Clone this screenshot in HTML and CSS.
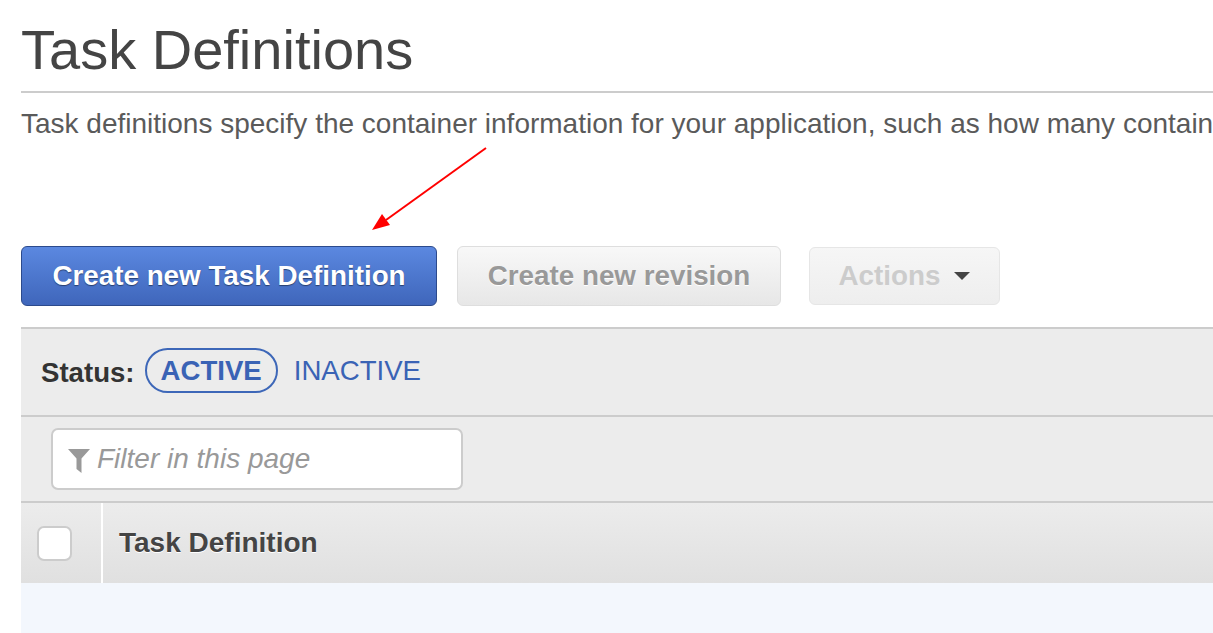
FILE: index.html
```html
<!DOCTYPE html>
<html>
<head>
<meta charset="utf-8">
<link rel="stylesheet" href="styles.css">
</head>
<body>
<div class="page">
  <h1 class="title">Task Definitions</h1>
  <p class="desc">Task definitions specify the container information for your application, such as how many containers are part of your task, what resources they will use, how they are linked together, and which host ports they will use.</p>
  <div class="toolbar">
    <button class="btn btn-primary">Create new Task Definition</button>
    <button class="btn btn-default">Create new revision</button>
    <button class="btn btn-actions">Actions <span class="caret"></span></button>
  </div>
  <div class="panel">
    <div class="status-row">
      <span class="status-label">Status:</span>
      <span class="pill">ACTIVE</span>
      <span class="status-link">INACTIVE</span>
    </div>
    <div class="filter-row">
      <div class="filter">
        <svg class="funnel" width="22" height="24" viewBox="0 0 22 24"><path d="M0 0 H22 L13.5 9.5 V24 L8.5 20 V9.5 Z" fill="#999"/></svg>
        <span class="placeholder">Filter in this page</span>
      </div>
    </div>
    <div class="table-head">
      <div class="check-cell"><span class="checkbox"></span></div>
      <div class="head-cell">Task Definition</div>
    </div>
    <div class="table-body"></div>
  </div>
  <svg class="arrow" width="140" height="100" viewBox="0 0 140 100">
    <line x1="136" y1="2" x2="36" y2="74" stroke="#f00" stroke-width="2"/>
    <path d="M22 84 L32 68 L40 79 Z" fill="#f00"/>
  </svg>
</div>
</body>
</html>
```
FILE: styles.css
```css
html, body {
  margin: 0;
  padding: 0;
  background: #fff;
  font-family: "Liberation Sans", Arial, sans-serif;
}
.page {
  position: relative;
  padding-left: 21px;
  height: 633px;
  overflow: hidden;
}
.title {
  margin: 18px 0 0 0;
  font-size: 56px;
  line-height: 63px;
  font-weight: normal;
  color: #444;
  padding-bottom: 10px;
  border-bottom: 2px solid #ccc;
  width: 1400px;
}
.desc {
  margin: 13px 0 0 0;
  font-size: 28px;
  line-height: 36px;
  color: #5a5a5a;
  white-space: nowrap;
}
.toolbar {
  display: flex;
  align-items: center;
  gap: 20px;
  margin-top: 104px;
  margin-bottom: 21px;
}
.btn {
  font-family: "Liberation Sans", Arial, sans-serif;
  font-size: 27.8px;
  font-weight: bold;
  height: 60px;
  padding: 0;
  border-radius: 6px;
  box-sizing: border-box;
}
.btn-primary {
  width: 416px;
  color: #fff;
  background: linear-gradient(#5b88e0, #3f66bb);
  border: 1px solid #2c4a8c;
  text-shadow: 0 1px 1px rgba(0, 0, 0, 0.45);
}
.btn-default {
  width: 324px;
  color: #999;
  background: linear-gradient(#f8f8f8, #e7e7e7);
  border: 1px solid #dedede;
  text-shadow: 0 1px 0 #fff;
}
.btn-actions {
  margin-left: 8px;
  width: 191px;
  height: 58px;
  color: #ccc;
  background: linear-gradient(#f6f6f6, #eeeeee);
  border: 1px solid #e6e6e6;
  display: flex;
  align-items: center;
  justify-content: center;
  gap: 14px;
  padding: 0;
}
.caret {
  display: inline-block;
  width: 0;
  height: 0;
  border-left: 8px solid transparent;
  border-right: 8px solid transparent;
  border-top: 8px solid #444;
}
.panel {
  border-top: 2px solid #ccc;
  width: 1400px;
}
.status-row {
  height: 86px;
  background: #ececec;
  display: flex;
  align-items: center;
  padding-left: 20px;
  border-bottom: 2px solid #ccc;
  font-size: 27.6px;
}
.status-label {
  font-weight: bold;
  color: #333;
  margin-top: 2px;
}
.pill {
  margin-left: 10px;
  height: 45px;
  box-sizing: border-box;
  border: 2px solid #3d67b8;
  border-radius: 23px;
  padding: 0 14px;
  display: flex;
  align-items: center;
  color: #3a63b5;
  font-weight: bold;
  margin-top: -3px;
}
.status-link {
  margin-left: 16px;
  color: #3a63b5;
  margin-top: -2px;
}
.filter-row {
  height: 84px;
  background: #ececec;
  border-bottom: 2px solid #ccc;
  display: flex;
  align-items: center;
  padding-left: 30px;
}
.filter {
  width: 412px;
  height: 62px;
  box-sizing: border-box;
  background: #fff;
  border: 2px solid #ccc;
  border-radius: 7px;
  display: flex;
  align-items: center;
  padding-left: 15px;
}
.funnel {
  margin-top: 4px;
}
.placeholder {
  margin-left: 7px;
  font-size: 28px;
  font-style: italic;
  color: #999;
}
.table-head {
  height: 80px;
  display: flex;
  background: linear-gradient(#ececec, #e0e0e0);
}
.check-cell {
  width: 82px;
  display: flex;
  align-items: center;
  padding-left: 16px;
  box-sizing: border-box;
  border-right: 2px solid #fff;
}
.checkbox {
  width: 35px;
  height: 35px;
  box-sizing: border-box;
  background: #fff;
  border: 2px solid #ccc;
  border-radius: 7px;
}
.head-cell {
  display: flex;
  align-items: center;
  padding-left: 16px;
  font-size: 28px;
  font-weight: bold;
  color: #444;
  text-shadow: 0 1px 0 #fff;
}
.table-body {
  height: 60px;
  background: #f3f7fd;
}
.arrow {
  position: absolute;
  left: 350px;
  top: 146px;
}
```
